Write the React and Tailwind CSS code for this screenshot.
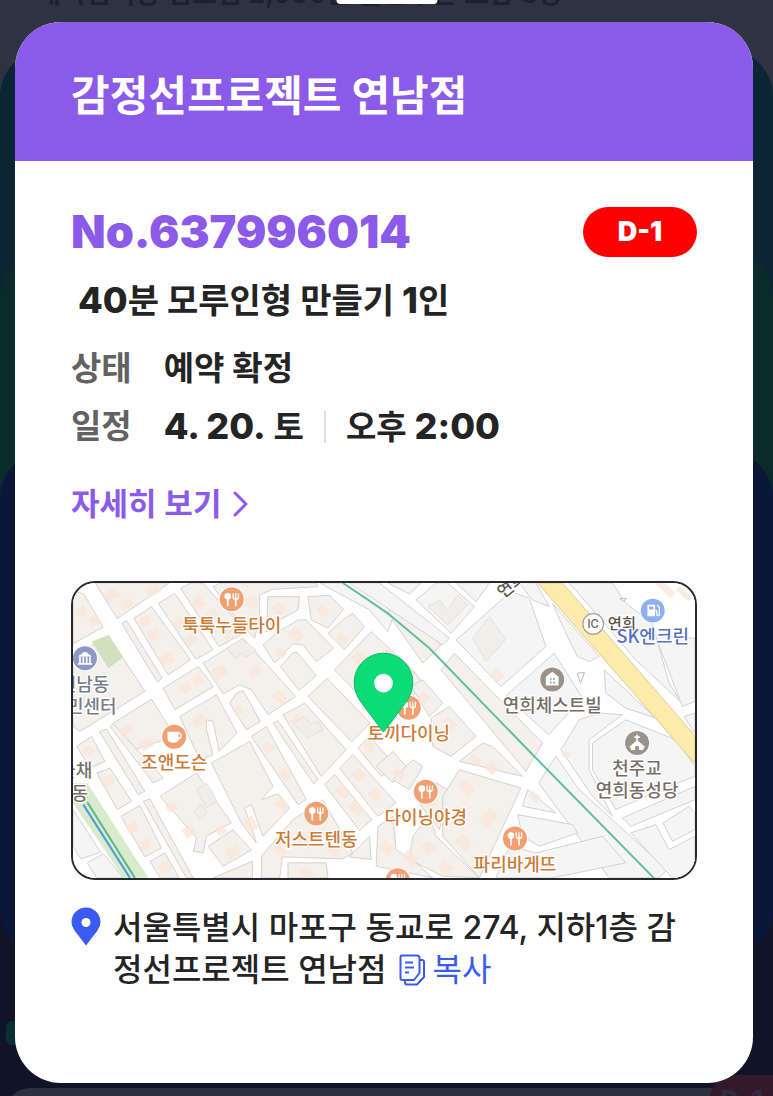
import React from "react";

const BEIGE = [
  "39,62 72,72 130,172 39,222",
  "106,39 328,39 172,146",
  "185,160 200,152 307,325 293,337",
  "222,145 275,110 392,270 325,315",
  "295,100 345,70 460,240 408,268",
  "362,55 392,39 430,39 560,185 478,230",
  "460,50 480,39 770,39 775,50 640,58 600,75 600,140 585,205 540,160",
  "625,80 720,80 715,120 660,150 620,185",
  "745,80 810,76 852,118 805,175 755,150",
  "610,225 650,190 715,150 740,150 822,235 770,275 730,225 700,222 645,280",
  "662,290 700,248 712,246 770,318 718,362",
  "805,190 850,150 880,130 915,170 855,240",
  "825,300 935,185 1060,300 1090,340 990,470",
  "745,380 802,325 932,460 877,516",
  "430,280 550,205 708,380 625,435 575,360 540,345 490,372",
  "310,355 415,290 462,350 345,420",
  "360,440 470,375 532,490 478,545 460,455 440,450 440,480 460,555 420,570",
  "510,400 530,370 550,362 602,455 560,480",
  "160,460 275,388 345,500 215,542",
  "455,580 570,515 640,650 605,690 655,672 690,715 610,800 575,705 555,715 590,820 545,760",
  "575,500 620,470 740,690 715,705",
  "640,460 655,453 775,630 762,643",
  "670,435 735,400 860,540 785,620",
  "50,530 95,500 135,575 90,595",
  "118,485 140,478 255,665 235,675",
  "150,470 160,462 310,625 280,640",
  "110,610 150,595 215,695 172,720",
  "250,695 270,688 400,925 380,925",
  "183,740 240,707 305,835 255,862",
  "270,875 315,850 358,925 300,925",
  "300,680 410,610 515,760 440,800 430,850 400,845 410,805",
  "445,830 520,780 575,842 490,890",
  "460,925 578,875 578,925",
  "605,860 700,750 790,690 880,850 850,868 668,862 660,925 605,925",
  "685,880 800,880 805,925 685,925",
  "795,645 825,615 937,750 900,783",
  "840,595 880,555 1010,700 955,740",
  "880,850 930,800 935,870 870,862",
  "955,770 1000,740 1010,840 1070,880 1120,925 950,890",
  "895,535 930,500 1010,590 965,620",
  "950,590 1000,545 1040,590 1000,640",
  "39,262 145,196 255,365 60,485 39,470",
  "1000,630 1060,570 1090,590 1050,660",
  "1110,735 1060,800 1050,870 1150,920 1260,925 1130,800",
  "1070,680 1130,640 1165,660 1140,780 1100,730",
  "980,240 1065,310 1020,365",
  "1055,350 1090,330 1150,400 1110,440",
  "1115,445 1170,410 1250,500 1175,560 1120,530",
  "1200,575 1270,520 1300,530 1390,620",
  "1150,680 1200,600 1385,655 1260,925 1150,800",
  "1145,300 1185,250 1450,520 1400,605",
  "985,130 1000,100 1145,225 1090,280",
];

const GREY = [
  "780,39 850,39 1000,145 985,185 930,120",
  "870,39 960,39 1170,205 1150,225",
  "985,39 1085,39 1050,72",
  "1070,90 1130,39 1165,39 1245,110 1175,190",
  "1190,39 1290,39 1250,95",
  "1190,210 1355,65 1410,85 1460,230 1325,350",
  "1340,378 1485,250 1570,385 1468,495",
  "1380,39 1430,39 1470,110 1420,90",
  "1480,100 1620,260 1590,275 1555,260 1520,190",
  "1635,300 1790,445 1700,415 1640,370",
  "1600,520 1700,450 1850,510 1908,590 1908,620 1830,650 1670,720 1600,600",
  "1505,540 1560,450 1620,430 1690,435 1590,510 1590,600 1660,740 1600,680",
  "1438,640 1490,560 1560,660 1825,900 1800,925 1650,925",
  "1390,710 1405,660 1490,730",
  "1375,735 1540,765 1555,790 1440,830 1390,800",
  "1350,830 1430,850 1630,800 1700,880 1480,925 1310,925",
  "1530,39 1660,39 1700,100 1780,160 1830,340 1868,400 1730,270",
  "1788,195 1908,205 1908,395 1870,410",
  "1875,440 1908,430 1908,490",
  "1690,745 1908,650 1908,690 1715,770",
  "1715,790 1790,765 1830,840 1908,800 1908,925 1840,925",
  "1812,760 1890,710 1908,730 1908,780 1840,815",
  "39,720 122,848 62,868 39,830",
  "82,880 130,852 190,925 110,925",
];

const BUILDINGS = [
  [135, 60, 40, 30], [180, 90, 36, 26], [260, 50, 40, 26], [50, 110, 28, 30], [90, 140, 26, 26],
  [240, 140, 30, 26], [265, 180, 34, 30], [300, 250, 40, 34], [340, 150, 30, 26], [375, 195, 36, 30],
  [400, 80, 30, 34], [440, 120, 34, 30], [490, 180, 34, 26], [560, 80, 34, 34], [640, 100, 34, 30],
  [690, 180, 40, 30], [650, 240, 28, 22], [775, 110, 32, 26], [830, 195, 34, 30], [880, 250, 38, 34],
  [460, 290, 40, 36], [570, 290, 34, 30], [640, 370, 40, 26], [360, 340, 34, 28], [400, 320, 30, 26],
  [400, 440, 34, 30], [520, 410, 30, 24], [180, 470, 36, 26], [240, 510, 40, 28], [70, 530, 30, 26],
  [130, 620, 30, 26], [200, 760, 34, 28], [240, 810, 34, 28], [300, 880, 34, 28], [320, 700, 30, 26],
  [370, 770, 36, 30], [470, 770, 30, 26], [500, 830, 40, 30], [560, 740, 30, 44], [650, 690, 34, 28],
  [610, 520, 30, 26], [660, 600, 34, 28], [700, 440, 34, 28], [830, 650, 40, 30], [870, 700, 40, 30],
  [880, 600, 34, 30], [930, 660, 34, 30], [640, 830, 40, 26], [720, 800, 44, 30], [800, 830, 44, 26],
  [720, 900, 44, 26], [960, 820, 40, 30], [1030, 850, 44, 30], [1090, 820, 34, 30], [1140, 880, 40, 30],
  [1000, 600, 34, 24], [1100, 690, 30, 26], [1200, 640, 44, 30], [1190, 800, 44, 36], [1270, 720, 36, 50],
  [1080, 370, 30, 26], [1150, 450, 40, 24], [1280, 580, 34, 30], [1295, 300, 36, 30], [1510, 545, 22, 20],
  [1410, 670, 34, 24], [915, 520, 32, 26], [1790, 45, 60, 22], [1850, 62, 50, 18], [1230, 560, 34, 22],
];

function Food({ x, y }) {
  return (
    <g transform={`translate(${x} ${y})`}>
      <circle r="39" fill="#fff" />
      <circle r="36" fill="#f1a073" />
      <circle cx="-12" cy="-9" r="10" fill="#fff" />
      <path d="M-12 0V19M12 -2V19" stroke="#fff" strokeWidth="5" strokeLinecap="round" />
      <path d="M4 -17V-8Q4 0 12 0Q20 0 20 -8V-17M12 -17V-2" stroke="#fff" strokeWidth="4" fill="none" strokeLinecap="round" />
    </g>
  );
}

function Label({ x, y, color = "#cc7a36", anchor = "middle", size = 54, children }) {
  return (
    <text
      x={x}
      y={y}
      fontSize={size}
      fill={color}
      textAnchor={anchor}
      stroke="#fff"
      strokeWidth="8"
      strokeLinejoin="round"
      paintOrder="stroke"
      className="font-['Noto_Sans_CJK_KR',sans-serif] font-medium"
    >
      {children}
    </text>
  );
}

function MapDrawing() {
  return (
    <svg viewBox="39 39 1869 885" preserveAspectRatio="xMidYMid slice" className="block h-auto w-full" role="img" aria-label="감정선프로젝트 연남점 지도">
      <rect x="30" y="30" width="1890" height="910" fill="#fff" />
      <g fill="#f4f0eb" stroke="#d5d2cf" strokeWidth="3" strokeLinejoin="round">
        {BEIGE.map((p) => <polygon key={p} points={p} />)}
      </g>
      <g fill="#f5f5f5" stroke="#d2d2d3" strokeWidth="3" strokeLinejoin="round">
        {GREY.map((p) => <polygon key={p} points={p} />)}
      </g>
      <g fill="#fae6d8">
        {BUILDINGS.map(([x, y, w, h]) => (
          <rect key={`${x}-${y}`} x={x} y={y} width={w} height={h} transform={`rotate(${x < 600 ? -30 : 42} ${x + w / 2} ${y + h / 2})`} opacity="0.75" />
        ))}
      </g>
      <g fill="#f1eeea" stroke="#dcd9d5" strokeWidth="2">
        <path d="M500 235L545 208L590 240L560 262L545 250L530 268ZM700 462L735 440L752 462L775 455L790 480L745 505ZM410 660L440 640L460 670L470 695L440 715ZM405 725L425 705L442 728L418 748Z" />
        <path d="M1240 205L1290 140L1340 208L1280 275ZM1105 110L1140 90L1165 120L1195 75L1225 105L1165 165Z" />
      </g>
      <path d="M95 215L145 196L190 262L145 295Z" fill="#cfe1bf" />
      <path d="M39 640L82 640L265 925L190 925L39 700Z" fill="#d9ebcb" />
      <path d="M82 698L225 925" stroke="#53b991" strokeWidth="6" />
      <path d="M70 705L210 925" stroke="#4f9ad8" strokeWidth="6" />
      <path d="M1435 39H1510L1908 498V582Z" fill="#fcebab" stroke="#d9cd9d" strokeWidth="3" />
      <path d="M1554 310L1576 308L1564 340ZM1682 86L1702 86L1694 94Z" fill="#fff" stroke="#bbb" strokeWidth="3" />
      <path d="M850 39Q920 85 985 130L1110 235L1430 565L1784 925" fill="none" stroke="#62bf9d" strokeWidth="6" />

      <Food x={516} y={88} />
      <Label x={516} y={186}>툭툭누들타이</Label>
      <Food x={770} y={732} />
      <Label x={770} y={830}>저스트텐동</Label>
      <Food x={1048} y={414} />
      <Label x={1048} y={511}>토끼다이닝</Label>
      <Food x={1099} y={666} />
      <Label x={1099} y={764}>다이닝야경</Label>
      <Food x={1367} y={807} />
      <Label x={1367} y={905}>파리바게뜨</Label>
      <Food x={1015} y={932} />

      <g transform="translate(343 501)">
        <circle r="39" fill="#fff" />
        <circle r="36" fill="#f1a073" />
        <path d="M-20 -15H14V4Q14 18 0 18H-6Q-20 18 -20 4Z" fill="#fff" />
        <path d="M13 -10H16Q21 -10 21 -3Q21 6 12 6" stroke="#fff" strokeWidth="4" fill="none" />
      </g>
      <Label x={343} y={598}>조앤도슨</Label>

      <g transform="translate(75 265)">
        <circle r="39" fill="#fff" />
        <circle r="36" fill="#8e98c4" />
        <path d="M-20 -5Q-17 -11 -11 -11Q-9 -19 0 -19Q9 -19 11 -11Q17 -11 20 -5Z" fill="#fff" />
        <path d="M-15 -5V16M-5 -5V16M5 -5V16M15 -5V16M-21 17H21" stroke="#fff" strokeWidth="5" />
      </g>
      <Label x={148} y={363} color="#777c8b" anchor="end">연남동</Label>
      <Label x={170} y={429} color="#777c8b" anchor="end">주민센터</Label>
      <Label x={97} y={622} color="#75706b" anchor="end">들채</Label>
      <Label x={84} y={690} color="#75706b" anchor="end">동</Label>

      <g transform="translate(1479 329)">
        <circle r="38" fill="#fff" />
        <circle r="36" fill="#9b9389" />
        <path d="M0 -23L19 -8V18H-19V-8Z" fill="#fff" />
        <path d="M-7 -4H-2V1H-7ZM3 -4H8V1H3ZM-7 7H-2V12H-7ZM3 7H8V12H3Z" fill="#9b9389" />
      </g>
      <Label x={1479} y={426} color="#786e66">연희체스트빌</Label>

      <g transform="translate(1734 520)">
        <circle r="38" fill="#fff" />
        <circle r="36" fill="#9b9389" />
        <path d="M0 -25V-2M-8 -18H8" stroke="#fff" strokeWidth="5" />
        <path d="M0 -9L24 12L19 15V21H6V12Q0 4 -6 12V21H-19V15L-24 12Z" fill="#fff" />
      </g>
      <Label x={1734} y={616} color="#786e66">천주교</Label>
      <Label x={1734} y={683} color="#786e66">연희동성당</Label>

      <g transform="rotate(-38 1356 44)">
        <Label x={1356} y={62} color="#5e534c" size={50}>연희</Label>
      </g>
      <circle cx="1602" cy="162" r="31" fill="#fff" stroke="#aaa29c" strokeWidth="4" />
      <text x="1602" y="174" fontSize="34" textAnchor="middle" fill="#6c625c" className="font-['Inter',sans-serif] font-medium">IC</text>
      <Label x={1646} y={176} color="#5e534c" anchor="start" size={46}>연희</Label>
      <g transform="translate(1781 122)">
        <circle r="38" fill="#fff" />
        <circle r="36" fill="#8fb0ef" />
        <path d="M-16 -18H7V17H-16Z" fill="#fff" />
        <path d="M-11 -12H2V-3H-11Z" fill="#8fb0ef" />
        <path d="M7 0H12V10Q12 15 16 15Q20 15 20 10V-9L13 -17" stroke="#fff" strokeWidth="4" fill="none" />
      </g>
      <Label x={1781} y={218} color="#5671c0">SK엔크린</Label>

      <path d="M972 487L908 402Q884 372 884 338A88 88 0 0 1 1060 338Q1060 372 1036 402Z" fill="#0bdc78" stroke="#07b864" strokeWidth="3" />
      <circle cx="972" cy="340" r="28" fill="#fff" />
    </svg>
  );
}

function Backdrop() {
  return (
    <div aria-hidden="true" className="absolute inset-0 overflow-hidden bg-[#101426]">
      <div className="flex h-[350px] items-start bg-[#2e3341]">
        <p className="-mt-[26px] truncate pl-9 text-[27px] leading-10 font-semibold text-[#1c2030]">
          게시입력상 김포점 2,000원 할인쿠폰 포함 8장
        </p>
      </div>
      <div className="-mt-[300px] h-[300px] rounded-t-[46px] bg-[#0b2535]" />
      <div className="-mt-[100px] h-[300px] rounded-t-[46px] bg-[#0d2a2b]" />
      <div className="-mt-[98px] h-[504px] rounded-[46px] bg-[#0c1638]" />
      <div className="mt-[65px] ml-[6px] h-6 w-10 rounded-md bg-[#0d2f33]" />
      <div className="mt-[43px] ml-[6px] h-20 rounded-t-[24px] bg-[#2c313f]" />
      <div className="absolute right-0 -bottom-7 flex h-[49px] w-[63px] items-center justify-center rounded-l-full rounded-tr-3xl bg-[#33192a] text-[26px] font-extrabold text-[#2a2f3d]">
        D-1
      </div>
      <div className="absolute top-0 left-1/2 h-1 w-[101px] -translate-x-1/2 rounded-b-md bg-white" />
    </div>
  );
}

function Num({ children }) {
  return <span className="text-[36px] font-extrabold">{children}</span>;
}

export default function App() {
  return (
    <div className="relative min-h-screen pt-[22px] pr-5 pb-[13px] pl-[15px] font-['Inter','Noto_Sans_CJK_KR',sans-serif] text-[#242424]">
      <Backdrop />
      <main className="relative overflow-hidden rounded-[46px] bg-white">
        <header className="bg-[#8c5ae8] px-14 pt-[49px] pb-10">
          <h1 className="text-[42px] leading-[50px] font-bold text-white">감정선프로젝트 연남점</h1>
        </header>

        <div className="px-14 pt-[46px] pb-[92px]">
          <div className="flex items-center justify-between">
            <p className="text-[45px] leading-[50px] font-black text-[#8c5ae8]">No.637996014</p>
            <span className="flex h-[50px] w-[114px] items-center justify-center rounded-full bg-[#ff0000] text-[27px] font-black text-white">D-1</span>
          </div>
          <h2 className="mt-[23px] pl-[7px] text-[34px] leading-10 font-bold">
            <Num>40</Num>분 모루인형 만들기 <Num>1</Num>인
          </h2>

          <dl className="mt-[27px] grid grid-cols-[auto_1fr] gap-x-8 gap-y-[18px] text-[33px] leading-10">
            <dt className="font-semibold text-[#626264]">상태</dt>
            <dd className="font-bold">예약 확정</dd>
            <dt className="font-semibold text-[#626264]">일정</dt>
            <dd className="flex items-center font-bold">
              <span><Num>4. 20.</Num> 토</span>
              <span className="mx-5 h-8 w-[2px] bg-[#dedee4]" />
              <span>오후 <Num>2:00</Num></span>
            </dd>
          </dl>

          <a href="#detail" className="mt-9 flex w-fit items-center gap-3 text-[31px] leading-[42px] font-semibold text-[#8c5ae8]">
            자세히 보기
            <svg viewBox="0 0 16 26" className="h-[26px] w-4" fill="none" stroke="currentColor" strokeWidth="3" strokeLinecap="round" strokeLinejoin="round">
              <path d="M2 2L13 13L2 24" />
            </svg>
          </a>

          <div className="mt-14 overflow-hidden rounded-[24px] border-2 border-[#26282b]">
            <MapDrawing />
          </div>

          <div className="mt-[27px] flex items-start gap-3">
            <svg viewBox="0 0 30 39" className="h-[39px] w-[30px] shrink-0" aria-hidden="true">
              <path d="M15 38.500L3.500 23.500Q0.500 19.500 0.500 15A14.500 14.500 0 0 1 29.500 15Q29.500 19.500 26.500 23.500Z" fill="#3b5bf0" />
              <circle cx="15" cy="15.500" r="4.500" fill="#fff" />
            </svg>
            <address className="text-[32px] leading-[42px] font-medium break-all not-italic">
              서울특별시 마포구 동교로 274, 지하1층 감정선프로젝트 연남점
              <button type="button" className="ml-3 inline-flex items-center gap-2 align-top font-normal text-[#3b5bf0]">
                <svg viewBox="0 0 26 32" className="h-8 w-[26px]" fill="none" stroke="currentColor" strokeWidth="2" strokeLinejoin="round" aria-hidden="true">
                  <path d="M3 1.500H18Q20.500 1.500 20.500 4V19L15 26H3Q1.500 26 1.500 24V3.500Q1.500 1.500 3 1.500Z" />
                  <path d="M21 6H23Q25 6 25 8V23L18 30.500H8Q6 30.500 6 28.500V26.500" />
                  <path d="M6 8.500H14M6 13.500H15M6 18.500H10" />
                </svg>
                복사
              </button>
            </address>
          </div>
        </div>
      </main>
    </div>
  );
}
